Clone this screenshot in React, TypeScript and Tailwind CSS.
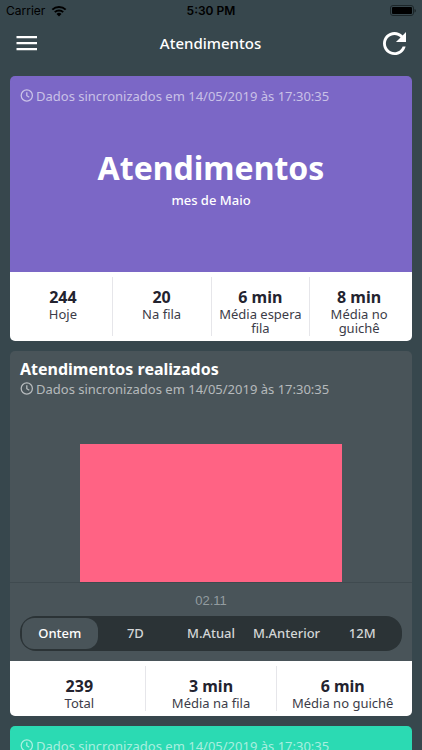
import { useState } from "react";

type Stat = { value: string; label: string };

const monthStats: Stat[] = [
  { value: "244", label: "Hoje" },
  { value: "20", label: "Na fila" },
  { value: "6 min", label: "Média espera fila" },
  { value: "8 min", label: "Média no guichê" },
];

const doneStats: Stat[] = [
  { value: "239", label: "Total" },
  { value: "3 min", label: "Média na fila" },
  { value: "6 min", label: "Média no guichê" },
];

const periods = ["Ontem", "7D", "M.Atual", "M.Anterior", "12M"];

function StatusBar() {
  return (
    <div className="grid h-5 grid-cols-3 items-center px-1.5 pt-0.5 font-[Inter,sans-serif] text-xs text-black">
      <div className="flex items-center gap-1.5">
        <span>Carrier</span>
        <svg className="h-3 w-4" viewBox="0 0 16 12" aria-label="Wi-Fi">
          <path
            d="M1.3 4.6a9.6 9.6 0 0 1 13.4 0M3.8 7.1a6 6 0 0 1 8.4 0"
            fill="none"
            stroke="currentColor"
            strokeWidth="2"
          />
          <path d="M8 11.6 5.5 9.1a3.5 3.5 0 0 1 5 0z" fill="currentColor" />
        </svg>
      </div>
      <span className="text-center font-semibold">5:30 PM</span>
      <svg className="h-3 w-7 justify-self-end" viewBox="0 0 28 12" aria-label="Bateria">
        <rect x="2.5" y="0.5" width="23" height="10" rx="2.5" fill="none" stroke="#1c2629" />
        <rect x="4" y="2" width="20" height="7" rx="1" fill="black" />
        <path d="M26.500 4v3.500c1-.3 1.400-1 1.400-1.700S27.500 4.300 26.500 4z" fill="#1c2629" />
      </svg>
    </div>
  );
}

function SyncInfo() {
  return (
    <p className="flex items-center gap-0.5 text-[13px]/5 whitespace-nowrap text-white/60">
      <svg
        className="size-3.5 shrink-0"
        viewBox="0 0 14 14"
        fill="none"
        stroke="currentColor"
        strokeWidth="1.3"
        aria-hidden="true"
      >
        <circle cx="6.8" cy="6.5" r="5.6" />
        <path d="M6.8 3.2V6.7L9.300 8.2" />
      </svg>
      Dados sincronizados em 14/05/2019 às 17:30:35
    </p>
  );
}

function Stats({ items }: { items: Stat[] }) {
  return (
    <dl className="flex bg-white px-1 py-[5px] text-center text-[#23232f]">
      {items.map((item) => (
        <div
          key={item.label}
          className="flex flex-1 flex-col border-l border-[#e6e6ea] px-1 pt-2.5 pb-px first:border-l-0"
        >
          <dt className="order-2 text-[13px]/[14px] text-[#3c3c48]">{item.label}</dt>
          <dd className="text-base/5 font-bold">{item.value}</dd>
        </div>
      ))}
    </dl>
  );
}

export default function App() {
  const [period, setPeriod] = useState("Ontem");

  return (
    <div className="flex h-screen flex-col bg-[#37474d] font-['Noto_Sans',sans-serif] text-white">
      <StatusBar />
      <header className="flex h-[46px] shrink-0 items-center justify-between px-4">
        <button type="button" aria-label="Menu">
          <svg className="h-4 w-[22px]" viewBox="0 0 22 16" fill="white">
            <path d="M0.5 1h20.5v2.200H0.5zM0.5 7h20.5v2.200H0.5zM0.5 13h20.5v2.200H0.5z" />
          </svg>
        </button>
        <h1 className="text-[15px] font-medium">Atendimentos</h1>
        <button type="button" aria-label="Atualizar">
          <svg className="size-[23px]" viewBox="4 4 16 16" fill="white">
            <path d="M17.65 6.35C16.2 4.9 14.21 4 12 4c-4.42 0-7.99 3.58-7.99 8s3.57 8 7.99 8c3.73 0 6.84-2.55 7.73-6h-2.08c-.82 2.33-3.04 4-5.65 4-3.31 0-6-2.69-6-6s2.69-6 6-6c1.66 0 3.14.69 4.22 1.78L13 11h7V4l-2.35 2.35z" />
          </svg>
        </button>
      </header>

      <main className="flex min-h-0 flex-1 flex-col gap-2.5 overflow-y-auto p-2.5 [scrollbar-width:none]">
        <section className="shrink-0 overflow-hidden rounded-[5px]">
          <div className="flex h-[196px] flex-col bg-[#7b67c6] p-2.5">
            <SyncInfo />
            <div className="flex flex-1 flex-col items-center pt-10">
              <h2 className="text-[32px]/[44px] font-bold">Atendimentos</h2>
              <p className="text-[13px]/5 font-medium">mes de Maio</p>
            </div>
          </div>
          <Stats items={monthStats} />
        </section>

        <section className="shrink-0 overflow-hidden rounded-[5px] bg-[#495459]">
          <div className="px-2.5 pt-2">
            <h2 className="text-base/5 font-bold">Atendimentos realizados</h2>
            <SyncInfo />
          </div>
          <figure>
            <div className="mt-[45px] flex h-[139px] justify-center border-b border-[#3f4a4f]">
              <div className="w-[65%] bg-[#ff6384]" />
            </div>
            <figcaption className="pt-2 text-center font-['Liberation_Sans',sans-serif] text-[13px]/5 text-[#939ca0]">
              02.11
            </figcaption>
          </figure>
          <div className="m-2.5 mt-[5px] flex rounded-2xl bg-[#2b3336] p-0.5">
            {periods.map((name) => (
              <button
                key={name}
                type="button"
                aria-pressed={period === name}
                onClick={() => setPeriod(name)}
                className={`h-[31px] flex-1 basis-0 rounded-xl text-[13px] font-medium ${
                  period === name ? "bg-[#495459] text-white" : "text-[#d3d6d7]"
                }`}
              >
                {name}
              </button>
            ))}
          </div>
          <Stats items={doneStats} />
        </section>

        <section className="h-48 shrink-0 rounded-[5px] bg-[#2bdab3] p-2.5">
          <SyncInfo />
        </section>
      </main>
    </div>
  );
}
